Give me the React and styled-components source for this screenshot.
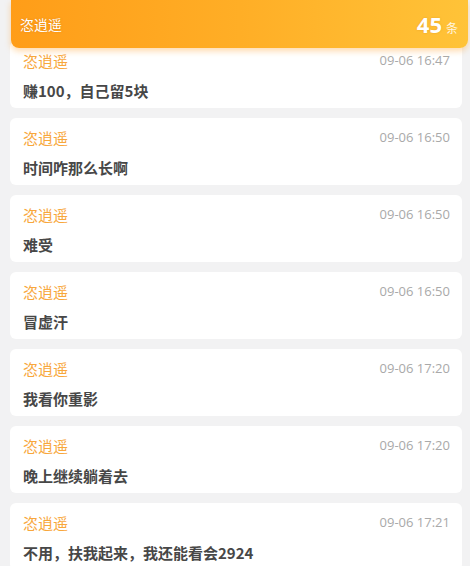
import React from "react"
import styled, { createGlobalStyle } from "styled-components"

const GlobalStyle = createGlobalStyle`
  html, body {
    margin: 0;
    padding: 0;
    background: #f2f2f3;
    font-family: "Noto Sans CJK SC", "Noto Sans", sans-serif;
    overflow: hidden;
  }
`

const Page = styled.div`
  position: relative;
  height: 566px;
  overflow: hidden;
`

const Header = styled.div`
  position: absolute;
  top: 0;
  left: 11px;
  right: 2px;
  height: 48px;
  z-index: 2;
  display: flex;
  align-items: center;
  justify-content: space-between;
  padding: 0 10px 0 9px;
  border-radius: 0 0 8px 8px;
  background: linear-gradient(90deg, #ff9d18 0%, #ffae26 50%, #ffc338 100%);
  box-shadow: 0 3px 6px rgba(255, 150, 20, 0.35);
  color: #fff;
`

const HeaderName = styled.span`
  font-size: 14px;
  text-shadow: 0 0 2px rgba(180, 90, 0, 0.4);
`

const Count = styled.span`
  display: flex;
  align-items: baseline;
  gap: 4px;
`

const CountNum = styled.span`
  font-family: "Open Sans", sans-serif;
  font-size: 22px;
  font-weight: 700;
  text-shadow: 0 0 2px rgba(180, 90, 0, 0.3);
`

const CountUnit = styled.span`
  font-size: 12px;
  color: #fff6e0;
`

const List = styled.div`
  display: flex;
  flex-direction: column;
  gap: 10px;
  padding: 41px 8px 0 10px;
`

const Card = styled.div`
  background: #fff;
  border-radius: 6px;
  padding: 10px 12px 7px 13px;
  height: 67px;
  box-sizing: border-box;
`

const Top = styled.div`
  display: flex;
  justify-content: space-between;
  align-items: center;
  height: 18px;
`

const Name = styled.span`
  font-size: 15px;
  color: #f8a73c;
`

const Time = styled.span`
  font-family: "Open Sans", sans-serif;
  font-size: 13px;
  color: #a9a9a9;
`

const Text = styled.div`
  margin-top: 12px;
  line-height: 20px;
  font-size: 15px;
  font-weight: 700;
  color: #474747;
`

const messages = [
  ["09-06 16:47", "赚100，自己留5块"],
  ["09-06 16:50", "时间咋那么长啊"],
  ["09-06 16:50", "难受"],
  ["09-06 16:50", "冒虚汗"],
  ["09-06 17:20", "我看你重影"],
  ["09-06 17:20", "晚上继续躺着去"],
  ["09-06 17:21", "不用，扶我起来，我还能看会2924"],
]

const App = () => (
  <Page>
    <GlobalStyle />
    <Header>
      <HeaderName>恣逍遥</HeaderName>
      <Count>
        <CountNum>45</CountNum>
        <CountUnit>条</CountUnit>
      </Count>
    </Header>
    <List>
      {messages.map(([time, text], i) => (
        <Card key={i}>
          <Top>
            <Name>恣逍遥</Name>
            <Time>{time}</Time>
          </Top>
          <Text>{text}</Text>
        </Card>
      ))}
    </List>
  </Page>
)

export default App
